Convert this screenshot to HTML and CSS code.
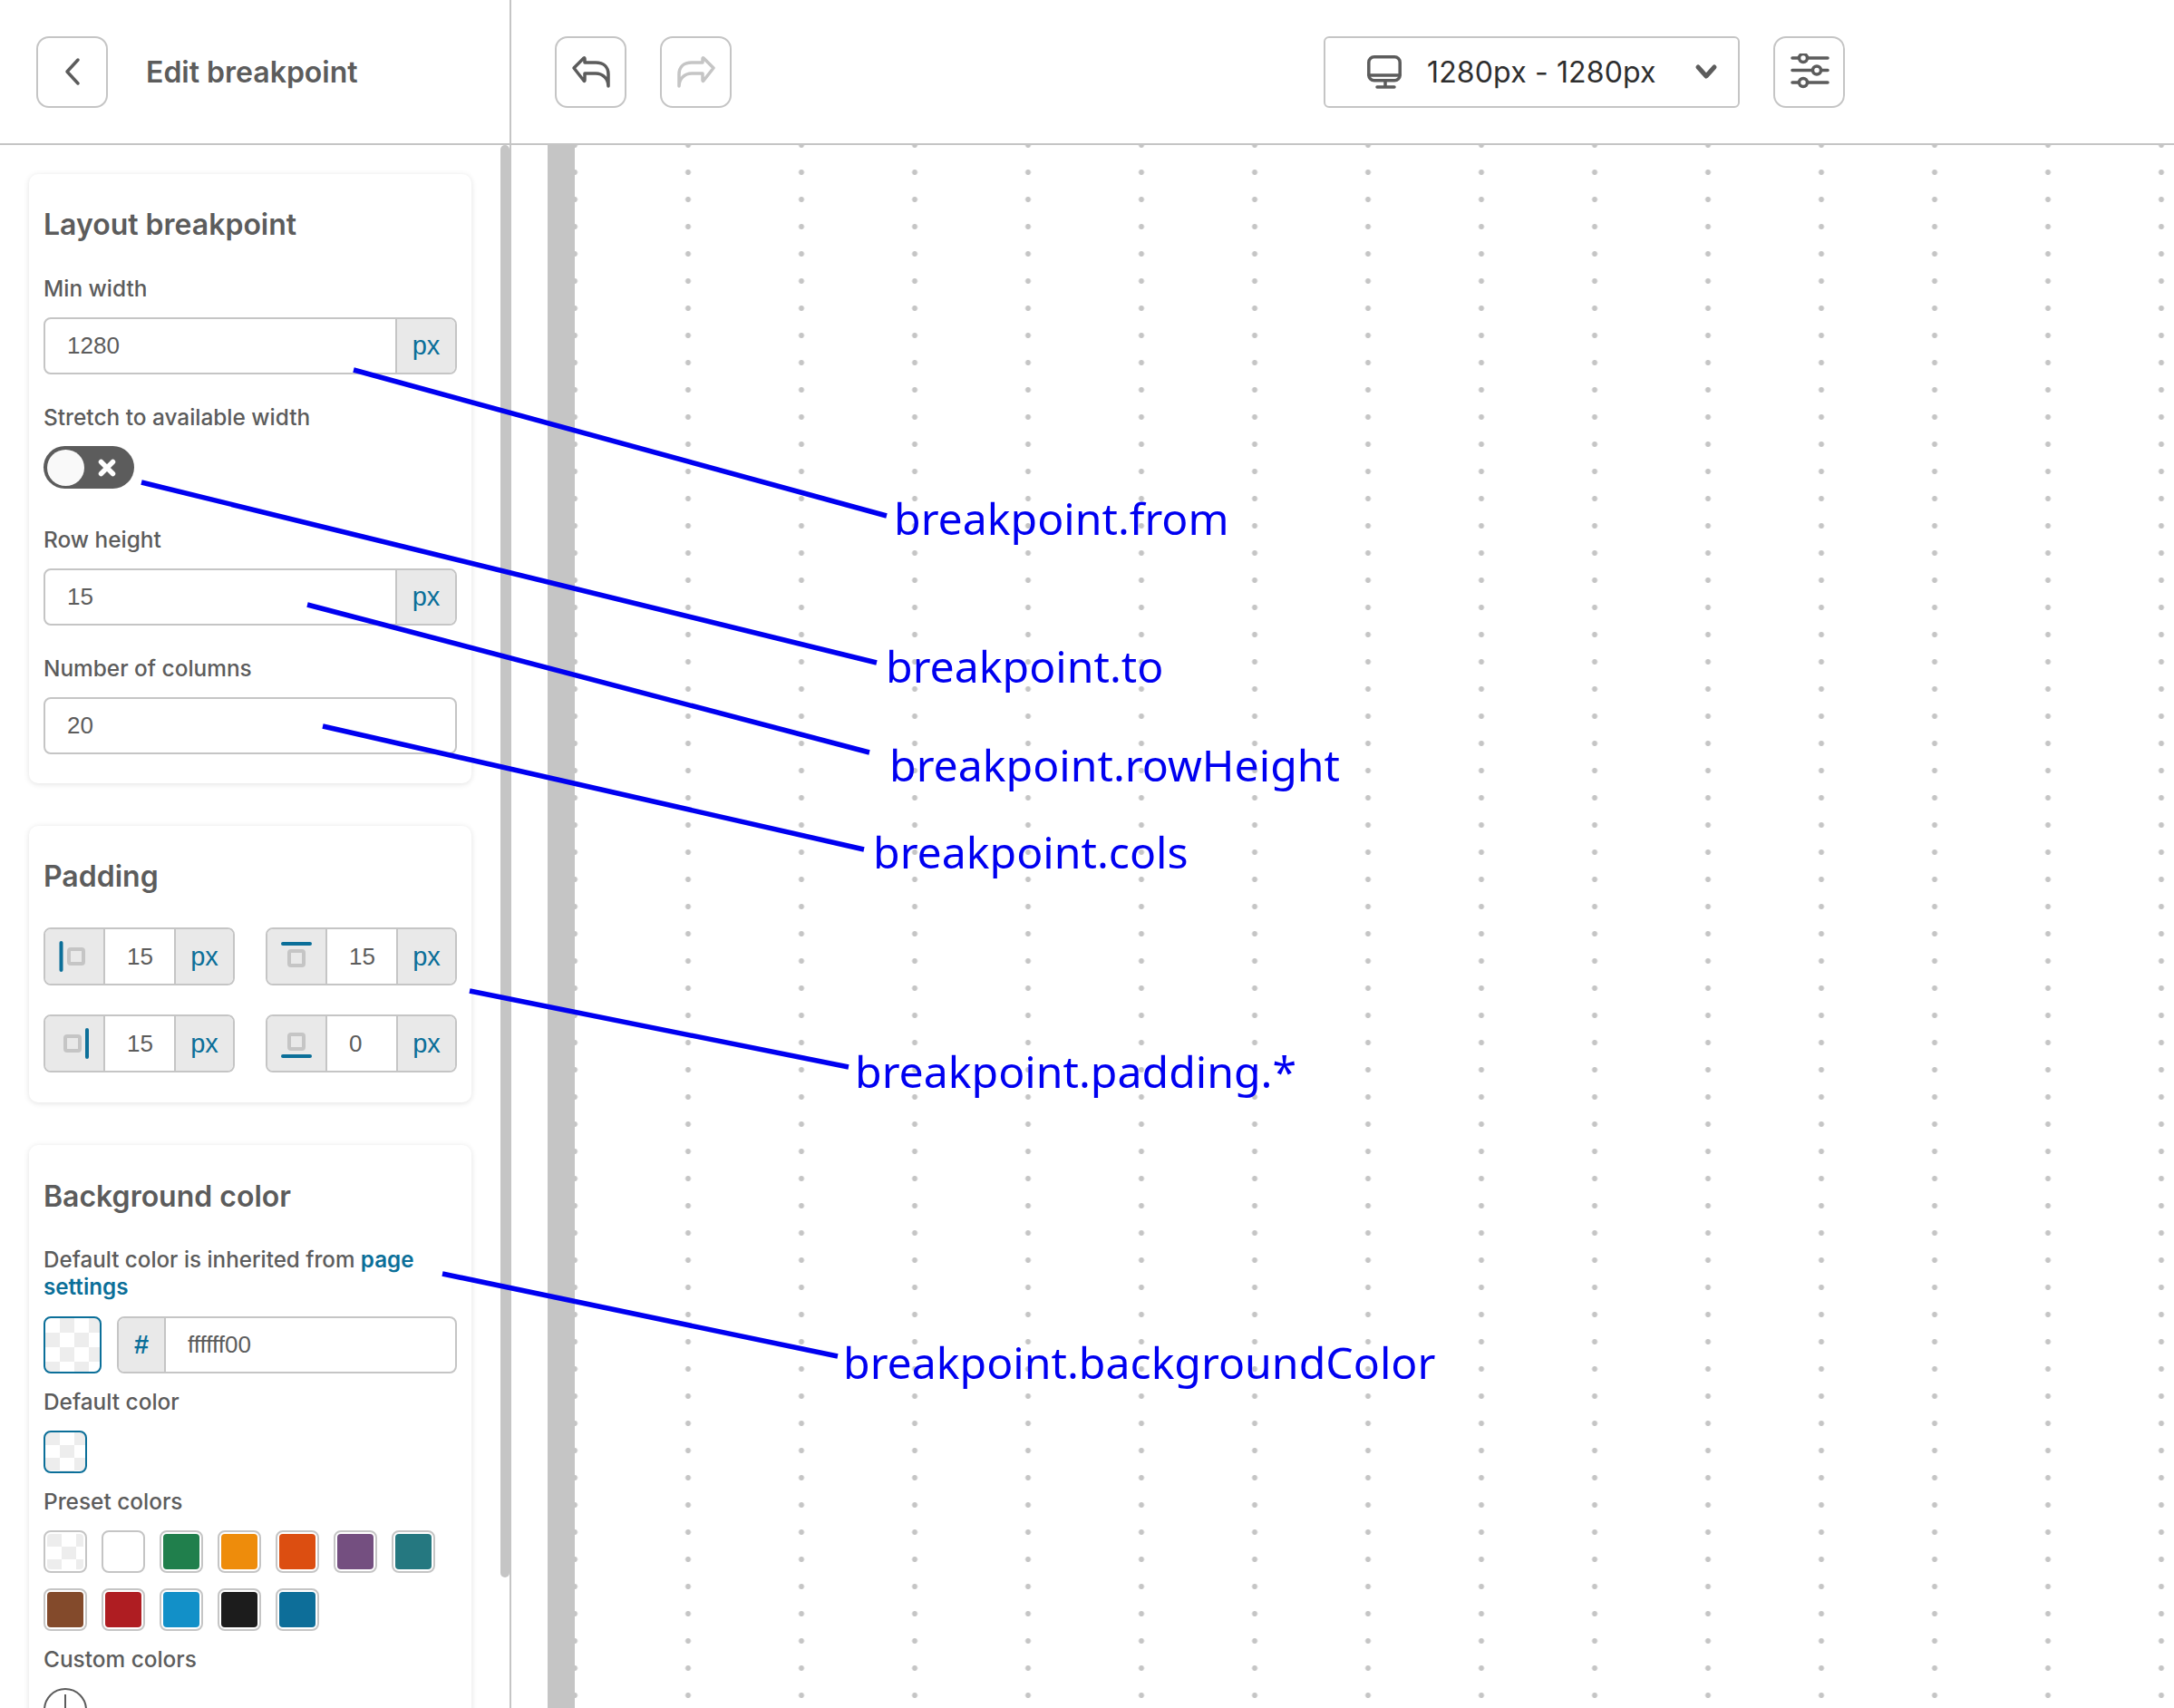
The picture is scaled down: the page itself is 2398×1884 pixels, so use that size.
FILE: index.html
```html
<!DOCTYPE html>
<html lang="en">
	<head>
		<title>Edit breakpoint</title>
		<link rel="stylesheet" href="styles.css">
	</head>
	<body>
		<header class="topbar">
			<div class="topbar-left">
				<button class="icon-btn" type="button">
					<svg width="20" height="34" viewBox="0 0 20 34"><path class="stroke-dark" d="M16 4 L4 17 L16 30"/></svg>
				</button>
				<span class="page-title">Edit breakpoint</span>
			</div>
			<div class="topbar-right">
				<button class="icon-btn" type="button">
					<svg width="44" height="36" viewBox="0 0 44 36"><path class="stroke-dark" d="M3 14 L14 3 Q15 2.5 15 4 V8 H27 C36 8 41 13 41 21 V34 C41 26 35 20 27 20 H15 V27 Q15 29 14 28 Z"/></svg>
				</button>
				<button class="icon-btn" type="button">
					<svg width="44" height="36" viewBox="0 0 44 36"><path class="stroke-light" d="M41 14 L30 3 Q29 2.5 29 4 V8 H17 C8 8 3 13 3 21 V34 C3 26 9 20 17 20 H29 V27 Q29 29 30 28 Z"/></svg>
				</button>
				<div class="device-select">
					<svg width="44" height="42" viewBox="0 0 44 42"><rect class="stroke-dark" x="4.8" y="4.8" width="34.4" height="26" rx="6"/><path class="stroke-dark" d="M5 25 H39 M23 31 V37 M14 38 H33"/></svg>
					<span class="device-label">1280px - 1280px</span>
					<svg class="device-chevron" width="26" height="18" viewBox="0 0 26 18"><path class="stroke-dark thick" d="M4 4 L13 14 L22 4"/></svg>
				</div>
				<button class="icon-btn" type="button">
					<svg width="50" height="40" viewBox="0 0 50 40">
						<path class="stroke-dark" d="M6 5 H45 M6 18.5 H45 M6 32 H45"/>
						<circle class="knob" cx="18" cy="5" r="4.5"/>
						<circle class="knob" cx="33" cy="18.5" r="4.5"/>
						<circle class="knob" cx="18" cy="32" r="4.5"/>
					</svg>
				</button>
			</div>
		</header>

		<div class="workspace">
			<aside class="sidebar">
				<div class="sidebar-content">
					<section class="card layout-card">
						<h2 class="card-title">Layout breakpoint</h2>
						<div class="field first">
							<label class="field-label">Min width</label>
							<div class="input-group">
								<input class="text-input" type="text" value="1280">
								<span class="addon">px</span>
							</div>
						</div>
						<div class="field">
							<label class="field-label">Stretch to available width</label>
							<div class="toggle">
								<span class="toggle-knob"></span>
								<svg width="20" height="20" viewBox="0 0 20 20"><path class="toggle-x" d="M3.5 3.5 L16.5 16.5 M16.5 3.5 L3.5 16.5"/></svg>
							</div>
						</div>
						<div class="field wide">
							<label class="field-label">Row height</label>
							<div class="input-group">
								<input class="text-input" type="text" value="15">
								<span class="addon">px</span>
							</div>
						</div>
						<div class="field">
							<label class="field-label">Number of columns</label>
							<div class="input-group">
								<input class="text-input" type="text" value="20">
							</div>
						</div>
					</section>

					<section class="card">
						<h2 class="card-title">Padding</h2>
						<div class="padding-grid">
							<div class="input-group">
								<span class="addon side">
									<svg width="40" height="40" viewBox="0 0 40 40"><path class="bar" d="M5.5 5 V35"/><rect class="box" x="14" y="12" width="16" height="16" rx="2"/></svg>
								</span>
								<input class="text-input small" type="text" value="15">
								<span class="addon unit">px</span>
							</div>
							<div class="input-group">
								<span class="addon side">
									<svg width="40" height="40" viewBox="0 0 40 40"><path class="bar" d="M5 6 H35"/><rect class="box" x="12" y="14" width="16" height="16" rx="2"/></svg>
								</span>
								<input class="text-input small" type="text" value="15">
								<span class="addon unit">px</span>
							</div>
							<div class="input-group">
								<span class="addon side">
									<svg width="40" height="40" viewBox="0 0 40 40"><path class="bar" d="M34 5 V35"/><rect class="box" x="10" y="12" width="16" height="16" rx="2"/></svg>
								</span>
								<input class="text-input small" type="text" value="15">
								<span class="addon unit">px</span>
							</div>
							<div class="input-group">
								<span class="addon side">
									<svg width="40" height="40" viewBox="0 0 40 40"><path class="bar" d="M5 34 H35"/><rect class="box" x="12" y="10" width="16" height="16" rx="2"/></svg>
								</span>
								<input class="text-input small" type="text" value="0">
								<span class="addon unit">px</span>
							</div>
						</div>
					</section>

					<section class="card background-card">
						<h2 class="card-title">Background color</h2>
						<p class="hint">Default color is inherited from <a class="link" href="#">page settings</a></p>
						<div class="color-row">
							<span class="color-current checker"></span>
							<div class="input-group grow">
								<span class="addon hash">#</span>
								<input class="text-input hex" type="text" value="ffffff00">
							</div>
						</div>
						<div class="field tight">
							<label class="field-label">Default color</label>
							<span class="swatch selected checker small-check"></span>
						</div>
						<div class="field tight">
							<label class="field-label">Preset colors</label>
							<div class="swatches">
								<span class="swatch preset"><i class="checker small-check"></i></span>
								<span class="swatch preset"><i class="c-white"></i></span>
								<span class="swatch preset"><i class="c-green"></i></span>
								<span class="swatch preset"><i class="c-orange"></i></span>
								<span class="swatch preset"><i class="c-rust"></i></span>
								<span class="swatch preset"><i class="c-purple"></i></span>
								<span class="swatch preset"><i class="c-teal"></i></span>
								<span class="swatch preset"><i class="c-brown"></i></span>
								<span class="swatch preset"><i class="c-red"></i></span>
								<span class="swatch preset"><i class="c-sky"></i></span>
								<span class="swatch preset"><i class="c-black"></i></span>
								<span class="swatch preset"><i class="c-ocean"></i></span>
							</div>
						</div>
						<div class="field tight">
							<label class="field-label">Custom colors</label>
							<span class="add-color">
								<svg width="44" height="44" viewBox="0 0 44 44"><path class="add-plus" d="M22 5 V39 M5 22 H39"/></svg>
							</span>
						</div>
					</section>
				</div>
				<div class="scroll-track"><div class="scroll-thumb"></div></div>
			</aside>
			<main class="stage">
				<div class="stage-ruler"></div>
				<div class="stage-canvas"></div>
			</main>
		</div>

		<!-- annotations drawn on top of the screenshot -->
		<svg class="notes-lines" width="2398" height="1884" viewBox="0 0 2398 1884">
			<path d="M390 408 L978 569"/>
			<path d="M156 532 L967 731"/>
			<path d="M339 667 L959 830"/>
			<path d="M356 801 L953 937"/>
			<path d="M518 1093 L936 1177"/>
			<path d="M488 1405 L924 1496"/>
		</svg>
		<span class="note note-from">breakpoint.from</span>
		<span class="note note-to">breakpoint.to</span>
		<span class="note note-row">breakpoint.rowHeight</span>
		<span class="note note-cols">breakpoint.cols</span>
		<span class="note note-padding">breakpoint.padding.*</span>
		<span class="note note-bg">breakpoint.backgroundColor</span>
	</body>
</html>
```

FILE: styles.css
```css
* {
	box-sizing: border-box;
}
html, body {
	margin: 0;
	height: 1884px;
	overflow: hidden;
}
body {
	position: relative;
	background: #fff;
	color: #5c5c5c;
	font-family: Inter, "Liberation Sans", sans-serif;
}
svg {
	display: block;
}

/* top bar */
.topbar {
	display: flex;
	height: 160px;
	border-bottom: 2px solid #c5c5c5;
}
.topbar-left {
	display: flex;
	align-items: center;
	width: 564px;
	padding: 0 0 0 40px;
	border-right: 2px solid #c5c5c5;
}
.page-title {
	margin-left: 42px;
	font-size: 32px;
	font-weight: 600;
}
.topbar-right {
	display: flex;
	align-items: center;
	padding: 0 0 0 48px;
}
.topbar-right .icon-btn + .icon-btn {
	margin-left: 37px;
}
.icon-btn {
	display: flex;
	align-items: center;
	justify-content: center;
	width: 79px;
	height: 79px;
	padding: 0;
	background: #fff;
	border: 2px solid #c5c5c5;
	border-radius: 14px;
}
.stroke-dark, .stroke-light {
	fill: none;
	stroke: #5c5c5c;
	stroke-width: 3.5;
	stroke-linecap: round;
	stroke-linejoin: round;
}
.stroke-light {
	stroke: #c5c5c5;
}
.thick {
	stroke-width: 5;
}
.knob {
	fill: #fff;
	stroke: #5c5c5c;
	stroke-width: 3.5;
}
.device-select {
	display: flex;
	align-items: center;
	width: 459px;
	height: 79px;
	margin-left: 653px;
	margin-right: 37px;
	padding-left: 43px;
	border: 2px solid #c5c5c5;
	border-radius: 6px;
	color: #2e2e2e;
}
.device-label {
	margin-left: 25px;
	font-size: 32px;
	letter-spacing: 0.15px;
	white-space: nowrap;
}
.device-chevron {
	margin-left: 42px;
}

/* panel */
.workspace {
	display: flex;
	height: 1724px;
}
.sidebar {
	display: flex;
	width: 564px;
	border-right: 2px solid #c5c5c5;
}
.sidebar-content {
	display: flex;
	flex-direction: column;
	gap: 47px;
	width: 552px;
	padding: 32px 0 0 32px;
}
.scroll-track {
	width: 10px;
}
.scroll-thumb {
	height: 1580px;
	background: #c5c5c5;
	border-radius: 6px;
}
.card {
	flex: none;
	width: 488px;
	padding: 36px 16px 33px;
	background: #fff;
	border-radius: 10px;
	box-shadow: 0 1px 6px rgba(0, 0, 0, 0.12);
}
.layout-card {
	padding-bottom: 32px;
}
.background-card {
	padding-top: 37px;
}
.card-title {
	margin: 0;
	font-size: 32px;
	line-height: 40px;
	font-weight: 600;
}
.field {
	margin-top: 32px;
}
.field.first {
	margin-top: 35px;
}
.field.wide {
	margin-top: 41px;
}
.field.tight {
	margin-top: 16px;
}
.field-label {
	display: block;
	margin-bottom: 17px;
	font-size: 24.4px;
	line-height: 30px;
	font-weight: 500;
}

/* inputs */
.input-group {
	display: flex;
	height: 63px;
	background: #fff;
	border: 2px solid #c5c5c5;
	border-radius: 8px;
	overflow: hidden;
}
.input-group.grow {
	flex: 1;
}
.text-input {
	flex: 1;
	min-width: 0;
	padding: 0 0 0 24px;
	background: transparent;
	border: none;
	outline: none;
	color: #5c5c5c;
	font-family: "Liberation Sans", sans-serif;
	font-size: 26px;
}
.text-input.small {
	border-right: 2px solid #c5c5c5;
}
.addon {
	display: flex;
	flex: none;
	align-items: center;
	justify-content: center;
	width: 66px;
	background: #e9e9e9;
	border-left: 2px solid #c5c5c5;
	color: #0b6f99;
	font-family: "Liberation Sans", sans-serif;
	font-size: 29px;
}
.addon.unit {
	width: 63px;
	border-left: none;
}
.addon.side {
	border-left: none;
	border-right: 2px solid #c5c5c5;
}
.addon.hash {
	width: 52px;
	border-left: none;
	border-right: 2px solid #c5c5c5;
	font-weight: 700;
}
.bar {
	fill: none;
	stroke: #0b6f99;
	stroke-width: 4;
	stroke-linecap: round;
}
.box {
	fill: #e9e9e9;
	stroke: #c5c5c5;
	stroke-width: 4;
}
.toggle {
	display: flex;
	align-items: center;
	justify-content: space-between;
	width: 100px;
	height: 47px;
	padding: 0 20px 0 4px;
	background: #5c5c5c;
	border-radius: 24px;
}
.toggle-knob {
	width: 41px;
	height: 40px;
	background: #f9f9f9;
	border-radius: 50%;
}
.toggle-x {
	fill: none;
	stroke: #fff;
	stroke-width: 5.5;
	stroke-linecap: round;
}
.padding-grid {
	display: grid;
	grid-template-columns: 211px 211px;
	gap: 32px 34px;
	margin-top: 36px;
}
.padding-grid .input-group {
	height: 64px;
}

/* background color */
.hint {
	margin: 35px 0 17px;
	font-size: 24.2px;
	line-height: 30px;
	font-weight: 500;
}
.link {
	color: #0b6f99;
	font-weight: 600;
	text-decoration: none;
}
.color-row {
	display: flex;
	gap: 17px;
}
.checker {
	background: repeating-conic-gradient(#ededed 0 25%, #fff 0 50%) 0 0 / 32px 32px;
}
.small-check {
	background-size: 32px 28px;
	background-position: 16px 0;
}
.color-current {
	flex: none;
	width: 64px;
	height: 63px;
	border: 2px solid #0b6f99;
	border-radius: 8px;
}
.swatch {
	display: block;
	width: 48px;
	height: 47px;
	border-radius: 8px;
}
.swatch.selected {
	border: 2px solid #0b6f99;
}
.swatch.preset {
	padding: 2px;
	border: 2px solid #c5c5c5;
}
.swatch.preset i {
	display: block;
	height: 100%;
	border-radius: 4px;
}
.swatches {
	display: grid;
	grid-template-columns: repeat(7, 48px);
	gap: 17px 16px;
}
.c-white { background: #fff; }
.c-green { background: #207f4c; }
.c-orange { background: #ee8c0b; }
.c-rust { background: #dc4e11; }
.c-purple { background: #744f80; }
.c-teal { background: #257880; }
.c-brown { background: #834a2b; }
.c-red { background: #af1d22; }
.c-sky { background: #1290c8; }
.c-black { background: #1c1c1c; }
.c-ocean { background: #0d6e99; }
.add-color {
	display: flex;
	align-items: center;
	justify-content: center;
	width: 48px;
	height: 48px;
	border: 2px solid #5c5c5c;
	border-radius: 50%;
}
.add-plus {
	fill: none;
	stroke: #5c5c5c;
	stroke-width: 2;
}

/* canvas */
.stage {
	display: flex;
	flex: 1;
	padding-left: 40px;
}
.stage-ruler {
	width: 30px;
	background: #c5c5c5;
}
.stage-canvas {
	flex: 1;
	background-image: radial-gradient(circle, #c5c5c5 2.6px, transparent 3.4px);
	background-size: 125px 30px;
	background-position: -62.5px -15px;
}

/* annotations */
.notes-lines {
	position: absolute;
	left: 0;
	top: 0;
}
.notes-lines path {
	fill: none;
	stroke: #0000f0;
	stroke-width: 5.5;
}
.note {
	position: absolute;
	color: #0000f0;
	font-family: "Noto Sans", sans-serif;
	font-size: 48.2px;
	line-height: 60px;
	white-space: nowrap;
}
.note-from { left: 986px; top: 541px; }
.note-to { left: 977px; top: 704px; }
.note-row { left: 981px; top: 813px; }
.note-cols { left: 963px; top: 909px; }
.note-padding { left: 943px; top: 1151px; }
.note-bg { left: 930px; top: 1472px; }
```
